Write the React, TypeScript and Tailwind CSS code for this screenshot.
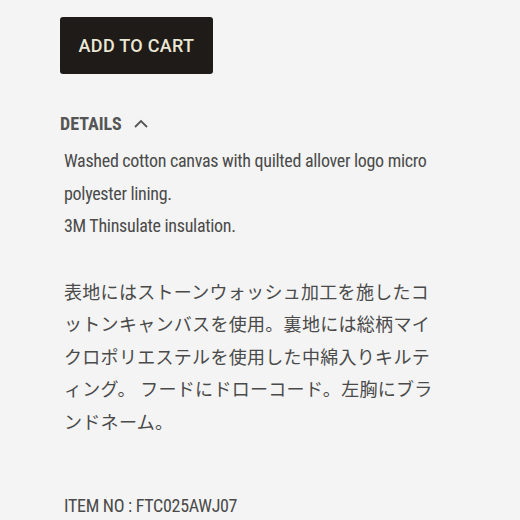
import React from "react";

const body = "'Liberation Sans Narrow', 'Roboto Condensed', 'DejaVu Sans Condensed', 'Noto Sans CJK JP', sans-serif";

export default function App() {
  return (
    <div className="w-[520px] h-[520px] overflow-hidden bg-[#f4f4f4] pl-[60px] pt-[17px]">
      <button
        className="w-[153px] h-[57px] rounded-[3px] bg-[#1e1b19] text-[#ebe7d4] text-[18px] font-medium tracking-[0.3px] flex items-center justify-center"
        style={{ fontFamily: "Roboto, 'Liberation Sans', Arial, sans-serif" }}
      >
        ADD TO CART
      </button>
      <div className="mt-[39px] flex items-center gap-[12px] text-[#555555]" style={{ fontFamily: body }}>
        <span className="text-[18px] font-bold leading-[22px]">DETAILS</span>
        <svg width="14" height="9" viewBox="0 0 14 9" fill="none" className="mt-[-2px]">
          <path d="M1 8 L7 2 L13 8" stroke="#555555" strokeWidth="1.8" />
        </svg>
      </div>
      <div
        className="mt-[10px] pl-[4px] w-[380px] text-[18px] leading-[32.5px] text-[#4a4a4a]"
        style={{ fontFamily: body }}
      >
        <p className="tracking-[-0.3px]">
          Washed cotton canvas with quilted allover logo micro polyester lining.
          <br />
          3M Thinsulate insulation.
        </p>
        <p className="mt-[34px] tracking-[0.3px]">
          表地にはストーンウォッシュ加工を施したコットンキャンバスを使用。裏地には総柄マイクロポリエステルを使用した中綿入りキルティング。 フードにドローコード。左胸にブランドネーム。
        </p>
        <p className="mt-[51px] tracking-[-0.3px]">ITEM NO : FTC025AWJ07</p>
      </div>
    </div>
  );
}
